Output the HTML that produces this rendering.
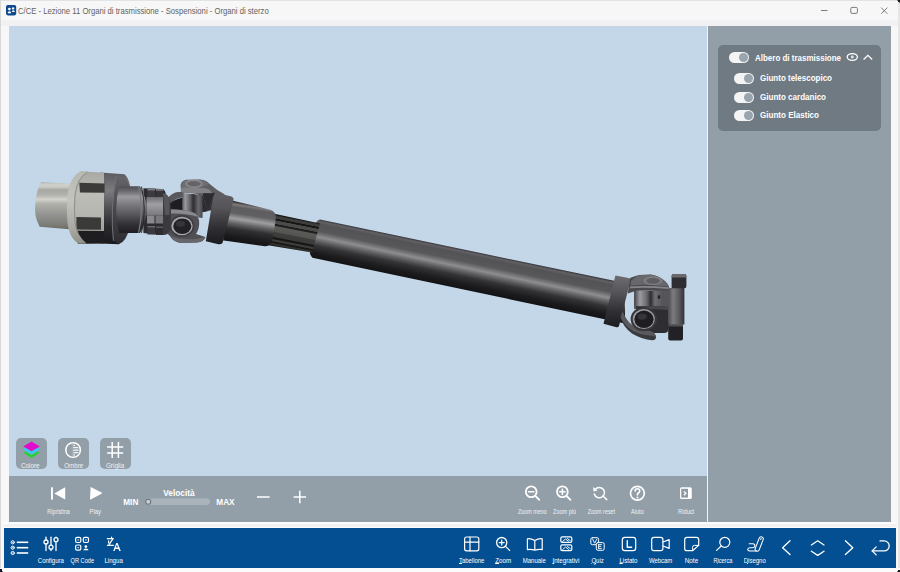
<!DOCTYPE html>
<html><head><meta charset="utf-8">
<style>
*{margin:0;padding:0;box-sizing:border-box}
html,body{width:900px;height:572px;overflow:hidden;background:#f7f7f7;font-family:"Liberation Sans",sans-serif}
.a{position:absolute}
.c{position:absolute;width:120px;text-align:center;white-space:nowrap;line-height:1}
.c span{display:inline-block;transform-origin:50% 50%}
.l{position:absolute;white-space:nowrap;line-height:1}
.l span{display:inline-block;transform-origin:0 50%}
.card{left:718px;top:45px;width:163px;height:86px;background:#6f7a83;border-radius:5px}
.tg{width:20px;height:11px;border-radius:6px;background:#f4f4f4}
.tg::after{content:"";position:absolute;right:1px;top:1px;width:9px;height:9px;border-radius:50%;background:#9aa4ad}
.vb{width:31px;height:31px;border-radius:5px;background:#939fa8}
svg{position:absolute;overflow:visible}

u{text-decoration:underline;text-decoration-thickness:0.7px;text-underline-offset:-0.2px}

</style></head><body>
<div class="a" style="left:0;top:0;width:900px;height:1px;background:#e3e3e3"></div>
<div class="a" style="left:0;top:20px;width:900px;height:6px;background:#f1f1f4"></div>
<div class="a" style="left:0;top:0;width:1px;height:572px;background:#d8d8d8"></div>
<div class="a" style="left:898px;top:0;width:2px;height:572px;background:#e6e6e6"></div>
<div class="a" style="left:9px;top:26px;width:698px;height:450px;background:#c3d7e8"></div>
<div class="a" style="left:707px;top:26px;width:1px;height:496px;background:#f2f5f8"></div>
<div class="a" style="left:708px;top:26px;width:183px;height:496px;background:#939fa8"></div>
<div class="a" style="left:9px;top:476px;width:698px;height:46px;background:#939fa8"></div>
<div class="a" style="left:4px;top:528px;width:892px;height:40px;background:#034f92"></div>
<div class="a" style="left:0;top:568px;width:900px;height:4px;background:#fbfbfb"></div>
<div class="a card"></div>
<div class="a tg" style="left:729px;top:52px"></div>
<div class="a tg" style="left:734px;top:73px"></div>
<div class="a tg" style="left:734px;top:92px"></div>
<div class="a tg" style="left:734px;top:110px"></div>
<div class="a vb" style="left:16px;top:438px"></div>
<div class="a vb" style="left:58px;top:438px"></div>
<div class="a vb" style="left:100px;top:438px"></div>
<div class="l" style="left:18px;top:6.5px;font-size:8.7px;color:#626262"><span style="transform:scaleX(0.885)">C/CE - Lezione 11 Organi di trasmissione - Sospensioni - Organi di sterzo</span></div>
<div class="l" style="left:755px;top:52.5px;font-size:9.5px;color:#fff;font-weight:bold"><span style="transform:scaleX(0.84)">Albero di trasmissione</span></div>
<div class="l" style="left:760px;top:73.2px;font-size:9.5px;color:#fff;font-weight:bold"><span style="transform:scaleX(0.842)">Giunto telescopico</span></div>
<div class="l" style="left:760px;top:91.8px;font-size:9.5px;color:#fff;font-weight:bold"><span style="transform:scaleX(0.845)">Giunto cardanico</span></div>
<div class="l" style="left:760px;top:110px;font-size:9.5px;color:#fff;font-weight:bold"><span style="transform:scaleX(0.847)">Giunto Elastico</span></div>
<div class="a" style="left:898px;top:0;width:2px;height:2px;background:#1c1c1c"></div>
<div class="a" style="left:897px;top:0;width:1px;height:1px;background:#777"></div>
<div class="a" style="left:899px;top:2px;width:1px;height:1px;background:#777"></div>
<div class="a" style="left:898px;top:570px;width:2px;height:2px;background:#1c1c1c"></div>
<div class="a" style="left:897px;top:571px;width:1px;height:1px;background:#777"></div>
<div class="a" style="left:0;top:569px;width:2px;height:3px;background:#14142a"></div>
<div class="a" style="left:2px;top:571px;width:1px;height:1px;background:#777"></div>
<div class="a" style="left:4px;top:522px;width:892px;height:2px;background:#fcfcfe"></div>
<div class="a" style="left:4px;top:524px;width:892px;height:3px;background:#f2f2f4"></div>
<div class="a" style="left:4px;top:527px;width:892px;height:1px;background:#fdfdfd"></div>

<svg class="a" style="left:0;top:0" width="900" height="572" viewBox="0 0 900 572">
<defs>
<linearGradient id="gBeige" gradientUnits="userSpaceOnUse" x1="0" y1="182" x2="0" y2="228"><stop offset="0" stop-color="#9a9a96"/><stop offset="0.04" stop-color="#cfcfcb"/><stop offset="0.11" stop-color="#cacac6"/><stop offset="0.17" stop-color="#a8a8a2"/><stop offset="0.28" stop-color="#b2b2ac"/><stop offset="0.38" stop-color="#d2d2cc"/><stop offset="0.48" stop-color="#b0b0aa"/><stop offset="0.72" stop-color="#929290"/><stop offset="0.96" stop-color="#7a7a74"/><stop offset="1" stop-color="#6a6a66"/></linearGradient>
<linearGradient id="gRim" gradientUnits="userSpaceOnUse" x1="0" y1="171" x2="0" y2="244">
<stop offset="0" stop-color="#b8b8b2"/><stop offset="0.4" stop-color="#c4c4be"/><stop offset="0.8" stop-color="#a8a8a2"/><stop offset="1" stop-color="#909088"/></linearGradient>
<linearGradient id="gBody" gradientUnits="userSpaceOnUse" x1="0" y1="172" x2="0" y2="244">
<stop offset="0" stop-color="#a9a9a4"/><stop offset="0.3" stop-color="#bdbdb8"/><stop offset="0.6" stop-color="#b6b6b0"/><stop offset="1" stop-color="#8e8e8a"/></linearGradient>
<linearGradient id="gCoupDark" gradientUnits="userSpaceOnUse" x1="0" y1="173" x2="0" y2="244">
<stop offset="0" stop-color="#5c5c60"/><stop offset="0.25" stop-color="#7c7c80"/><stop offset="0.5" stop-color="#505054"/><stop offset="0.75" stop-color="#2a2a2e"/><stop offset="1" stop-color="#1a1a1e"/></linearGradient>
<linearGradient id="gFace" gradientUnits="userSpaceOnUse" x1="0" y1="175" x2="0" y2="244">
<stop offset="0" stop-color="#66666a"/><stop offset="0.5" stop-color="#48484c"/><stop offset="1" stop-color="#2c2c30"/></linearGradient>
<linearGradient id="gHub" gradientUnits="userSpaceOnUse" x1="0" y1="186.5" x2="0" y2="233"><stop offset="0" stop-color="#505054"/><stop offset="0.1" stop-color="#6a6a6e"/><stop offset="0.22" stop-color="#9c9ca0"/><stop offset="0.38" stop-color="#7c7c80"/><stop offset="0.6" stop-color="#58585c"/><stop offset="0.8" stop-color="#333337"/><stop offset="1" stop-color="#1e1e22"/></linearGradient>
<linearGradient id="gSHub" gradientUnits="userSpaceOnUse" x1="0" y1="197" x2="0" y2="215.5"><stop offset="0" stop-color="#6e6e72"/><stop offset="0.4" stop-color="#a0a0a4"/><stop offset="1" stop-color="#78787c"/></linearGradient>
<linearGradient id="gTube" gradientUnits="userSpaceOnUse" x1="460" y1="248.7" x2="452" y2="287"><stop offset="0" stop-color="#343438"/><stop offset="0.05" stop-color="#626064"/><stop offset="0.12" stop-color="#535356"/><stop offset="0.3" stop-color="#58585b"/><stop offset="0.45" stop-color="#8e8e91"/><stop offset="0.56" stop-color="#5e5e61"/><stop offset="0.68" stop-color="#333335"/><stop offset="0.85" stop-color="#1c1c1e"/><stop offset="1" stop-color="#131315"/></linearGradient>
<linearGradient id="gSleeve" gradientUnits="userSpaceOnUse" x1="250" y1="204.3" x2="244" y2="243"><stop offset="0" stop-color="#38383c"/><stop offset="0.06" stop-color="#7e7a7c"/><stop offset="0.13" stop-color="#5e5c5e"/><stop offset="0.28" stop-color="#606062"/><stop offset="0.42" stop-color="#a09ea0"/><stop offset="0.54" stop-color="#646466"/><stop offset="0.68" stop-color="#303032"/><stop offset="0.88" stop-color="#1a1a1c"/><stop offset="1" stop-color="#141416"/></linearGradient>
<linearGradient id="gSpline" gradientUnits="userSpaceOnUse" x1="292" y1="218" x2="286" y2="248.5"><stop offset="0" stop-color="#181817"/><stop offset="0.05" stop-color="#3d3d3c"/><stop offset="0.11" stop-color="#3d3d3c"/><stop offset="0.13" stop-color="#151514"/><stop offset="0.17" stop-color="#181817"/><stop offset="0.19" stop-color="#4b4b49"/><stop offset="0.28" stop-color="#4b4b49"/><stop offset="0.3" stop-color="#1b1b1b"/><stop offset="0.34" stop-color="#222222"/><stop offset="0.37" stop-color="#5a5a57"/><stop offset="0.53" stop-color="#555552"/><stop offset="0.57" stop-color="#3d3d3c"/><stop offset="0.62" stop-color="#3d3d3c"/><stop offset="0.7" stop-color="#3a3a39"/><stop offset="0.73" stop-color="#151514"/><stop offset="0.77" stop-color="#181817"/><stop offset="0.8" stop-color="#3d3d3c"/><stop offset="0.84" stop-color="#3d3d3c"/><stop offset="0.87" stop-color="#151514"/><stop offset="0.9" stop-color="#181817"/><stop offset="0.92" stop-color="#30302e"/><stop offset="0.96" stop-color="#30302e"/><stop offset="1" stop-color="#10100f"/></linearGradient>
<linearGradient id="gCollar" gradientUnits="userSpaceOnUse" x1="0" y1="192" x2="0" y2="244">
<stop offset="0" stop-color="#626266"/><stop offset="0.3" stop-color="#555559"/><stop offset="0.7" stop-color="#2e2e32"/><stop offset="1" stop-color="#1c1c20"/></linearGradient>
<linearGradient id="gCollar2" gradientUnits="userSpaceOnUse" x1="0" y1="275" x2="0" y2="327">
<stop offset="0" stop-color="#6e6e72"/><stop offset="0.3" stop-color="#58585c"/><stop offset="0.7" stop-color="#303034"/><stop offset="1" stop-color="#1c1c20"/></linearGradient>
<linearGradient id="gSpindle" gradientUnits="userSpaceOnUse" x1="182.2" y1="0" x2="202.4" y2="0"><stop offset="0" stop-color="#5a5a5e"/><stop offset="0.15" stop-color="#9a9a9e"/><stop offset="0.42" stop-color="#5a5a5e"/><stop offset="0.55" stop-color="#2e2e32"/><stop offset="0.8" stop-color="#6a6a6e"/><stop offset="1" stop-color="#4a4a4e"/></linearGradient>
<linearGradient id="gSpindle2" gradientUnits="userSpaceOnUse" x1="634.6" y1="0" x2="661.5" y2="0"><stop offset="0" stop-color="#48484c"/><stop offset="0.2" stop-color="#9c9ca0"/><stop offset="0.45" stop-color="#6a6a6e"/><stop offset="0.6" stop-color="#2e2e32"/><stop offset="0.75" stop-color="#6e6e72"/><stop offset="1" stop-color="#5a5a5e"/></linearGradient>
<linearGradient id="gFlange" gradientUnits="userSpaceOnUse" x1="668" y1="0" x2="685" y2="0"><stop offset="0" stop-color="#4a4a4e"/><stop offset="0.3" stop-color="#7c7c80"/><stop offset="0.6" stop-color="#606064"/><stop offset="1" stop-color="#2e2e32"/></linearGradient>
</defs>
<!-- main tube -->
<path d="M320,219.6 L625,283.1 L625,323.6 L312.5,257.7 Q309.5,255 309.8,250 Q310.5,233 316,222.5 Q317.5,220 320,219.6 Z" fill="url(#gTube)"/>
<path d="M317,223.5 Q312.5,234 312,248" stroke="#a4a4a8" stroke-width="1.2" fill="none" opacity="0.75"/>
<!-- spline shaft -->
<path d="M272,213.2 L320,223.4 L312,252.5 L265,244.8 Z" fill="url(#gSpline)"/>
<!-- sleeve -->
<path d="M226,199 L270,209.8 Q276,211.5 275.8,218 L273,238 Q271,246.5 265,246.2 L220,240 Z" fill="url(#gSleeve)"/>
<path d="M226,200.5 Q218,220 220,239.4 L223.5,240 Q222,220 229,201.2 Z" fill="#6a6a6e"/>
<!-- collar 1 -->
<path d="M203,191 L216,192 L212.5,210 L203,212 Z" fill="#343438"/>
<path d="M214,192.2 L230.5,196.2 Q234,197.2 233.5,200 L222.5,243 Q221,244.5 218.5,244.2 L205.8,241.3 Z" fill="url(#gCollar)"/>
<!-- joint 1: back yoke ring -->
<path d="M164.5,204 Q168,195 176,192.3 L184,191.6 L184,197.2 Q176,197.6 171.5,202.5 L167.5,212 L164.5,212 Z" fill="#58585c"/>
<path d="M167.5,207 Q171,199.5 184,197.2 L184,215 L167,215 Z" fill="#1e1e22"/>
<!-- right yoke body behind spindle -->
<path d="M198,192 L214,192.2 L208,211 L199,213 Z" fill="#2c2c30"/>
<!-- spindle -->
<path d="M182.2,193 L202.4,195 L202.6,218 L182.2,216 Z" fill="url(#gSpindle)"/>
<!-- top ear + arm -->
<path d="M180.7,187.6 Q180,181 186,179.8 L200,179.4 Q207,180 209.4,183.7 L217.2,189.9 L225,194.5 L219,196 L213,195.5 L211.8,199.2 L207.9,210.9 Q205,203 203,196 Q198,193.5 190,193 L182,192.4 Q180.5,190 180.7,187.6 Z" fill="#5e5e62"/>
<path d="M181.5,186.8 Q181.5,181.2 186,180.2 L200,179.8 Q206,180.3 208.8,183.8 Q204,187.6 196,187.9 L184,187.7 Z" fill="#6e6e72"/>
<ellipse cx="194" cy="183.7" rx="8" ry="3.6" fill="none" stroke="#909094" stroke-width="1.3"/>
<ellipse cx="194" cy="183.7" rx="5.6" ry="2.3" fill="#646468"/>
<path d="M181,187.6 L203,187.9 Q208,188.2 210,190.3 L211.8,193.2 L203,193.3 L182.6,192.7 Q181,190.5 181,187.6 Z" fill="#828286"/>
<path d="M203,193.3 L211.8,193.2 L215,192.8 L211.8,199.2 L207.9,210.9 Q205.5,203 203,196 Z" fill="#2c2c30"/>
<!-- front yoke arm (left) -->
<path d="M159,210 Q172,208 188.6,211 Q197,213 199,220 Q200,228 196,234 L205.4,237 Q204,242 197,242.5 L180,243 Q172,241 170,236 Q162,230 160,219 Z" fill="#505054"/>
<path d="M159,210 Q172,208 188.6,211 Q196,212.5 198.5,217 Q188,213.8 174,213.5 Q166,213.5 159.5,214.5 Z" fill="#8a8a8e"/>
<path d="M171,236 Q180,240 195,239 Q201,238 205.4,237 Q203,241.5 197,242.5 L180,243 Q173,241 171,236 Z" fill="#68686c"/>
<!-- bearing cap -->
<ellipse cx="182" cy="226" rx="12.5" ry="11" fill="#3e3e42"/>
<ellipse cx="182" cy="226" rx="10.7" ry="9.2" fill="#a8a8ac"/>
<ellipse cx="182.3" cy="226.2" rx="9" ry="7.7" fill="#222226"/>
<ellipse cx="180.5" cy="223.8" rx="4.5" ry="3" fill="#36363a"/>
<!-- spline hub 1 -->
<path d="M143.4,188.2 L162,189 Q166,190 166,196 L165.5,229 Q165,235 160,235 L143.4,233 Z" fill="#2c2c30"/>
<rect x="147.5" y="188.6" width="7.5" height="8.4" fill="#3c3c40"/>
<rect x="156" y="189" width="7.5" height="8" fill="#36363a"/>
<rect x="147.5" y="188.6" width="7.5" height="1.8" fill="#808084"/>
<rect x="156" y="189" width="7.5" height="1.8" fill="#76767a"/>
<rect x="146.5" y="197" width="18" height="18.5" fill="url(#gSHub)"/>
<rect x="147" y="215.5" width="7.5" height="8" fill="#8a8a8e"/>
<rect x="155.5" y="215.5" width="8" height="8" fill="#7a7a7e"/>
<rect x="147.5" y="226" width="7.5" height="8.5" fill="#3a3a3e"/>
<rect x="156" y="226.5" width="7.5" height="8.5" fill="#2e2e32"/>
<rect x="147.5" y="226" width="7.5" height="1.4" fill="#6a6a6e"/>
<rect x="156" y="226.5" width="7.5" height="1.4" fill="#5e5e62"/>
<path d="M163,193 Q171,195 171,210 L170.5,228 Q169.5,235.5 163,235 Z" fill="#3a3a3e"/>
<path d="M163,193 Q168,194 169.5,200 L169.5,215 L165,215 Z" fill="#56565a"/>
<!-- coupling: dark section with end face -->
<path d="M100,172.6 L124.6,174.3 Q131,180 131.5,200 Q132,226 119,244.2 L100,243.5 Z" fill="url(#gCoupDark)"/>
<path d="M116.2,176.4 Q125,175.5 129.5,186 Q132.5,205 129.5,228 Q126,242 119,244 L113.4,240.7 Q110,210 116.2,176.4 Z" fill="url(#gFace)"/>
<path d="M116.2,176.4 Q110,210 113.4,240.7" stroke="#727276" stroke-width="1" fill="none"/>
<!-- hub cylinder -->
<path d="M119,186.2 L140,186.2 Q146.5,198 146.8,210 Q146.5,222 140,233 L119,233 Q113.5,210 119,186.2 Z" fill="url(#gHub)"/>
<path d="M138.6,186.4 Q144,210 138.6,232.8" stroke="#7c7c80" stroke-width="1.2" fill="none"/>
<path d="M141.5,186.6 Q147,210 141.5,232.8" stroke="#2a2a2e" stroke-width="1" fill="none"/>
<!-- coupling light body -->
<path d="M81,171.2 L104,172.8 L104,243.6 L79.5,243.8 Q69,236 68.5,208 Q69,180 81,171.2 Z" fill="url(#gBody)"/>
<path d="M79.3,182.8 L104.6,183.4 L104.6,192.8 L80,192.5 Z" fill="#3b3b3a"/>
<path d="M76.4,217 L101,217.4 L101,229.7 L76.4,229.5 Z" fill="#3a3a39"/>
<path d="M77,230.8 L104,231 L104,243.6 L77.8,243.8 Z" fill="#1e1e20"/>
<!-- left beige cylinder -->
<path d="M41,182.2 L72,183.8 Q66,206 70,229.2 L39.7,226.8 Q33.8,216 35.2,205 Q36,191 41,182.2 Z" fill="url(#gBeige)"/>
<!-- rim -->
<path d="M81,171.2 Q70,176 67.5,195 Q66,209 67.5,223 Q70,240 79.5,243.8 L86,243.4 Q76.5,236 75,222 Q74,209 75,195 Q77,178 87.5,172 Z" fill="url(#gRim)"/>
<path d="M87.5,172 Q77,178 75,195 Q74,209 75,222 Q76.5,236 86,243.4" stroke="#8c8c86" stroke-width="1" fill="none"/>
<!-- collar 2 -->
<path d="M615.4,275.5 L628.5,278 Q631,278.6 630.3,281 L619,326 Q618.4,327.6 616.5,327.3 L603.5,323.8 Z" fill="url(#gCollar2)"/>
<!-- joint 2 -->
<path d="M634,291 L669,289.5 L669.5,309 L634,309 Z" fill="#55555a"/>
<path d="M634.6,291 L661.5,291 L661.5,306 L634.6,306 Z" fill="url(#gSpindle2)"/>
<ellipse cx="659" cy="297" rx="1.3" ry="2" fill="#222226"/>
<path d="M627.7,293.4 L630,278 Q635,276 639.2,274.9 L650.8,274.5 Q658,275.5 663,279.5 Q668,283 669.2,287.2 L670,290.3 L666,290.3 L650.8,290.3 Q640,290.5 635.4,291 Z" fill="#4a4a4e"/>
<path d="M631,281 Q635,276.5 639.2,275.2 L650.8,274.8 Q658,275.8 663,279.8 Q667,283 668.5,286.5 Q660,285.5 650,285 Q640,284.5 631,285.5 Z" fill="#68686c"/>
<ellipse cx="653" cy="280.7" rx="9.5" ry="4.4" fill="#7e7e82"/>
<ellipse cx="653" cy="280.9" rx="6.8" ry="2.9" fill="#5e5e62"/>
<path d="M630,286.5 Q645,285 668.8,287.3 L669,289 Q645,287 630,288.3 Z" fill="#86868a"/>
<!-- flange -->
<path d="M668.9,288 L684.4,288 L684.4,324.5 L668.5,324.5 Z" fill="url(#gFlange)"/>
<path d="M671.6,276 Q671.6,274 673.5,274 L684.5,274 Q686.4,274 686.4,276 L686.4,286 Q686.4,288.2 684.5,288.2 L671.6,288.2 Z" fill="#2e2e32"/>
<path d="M671.6,276 Q671.6,274 673.5,274 L684.5,274 Q686.4,274 686.4,276 L686.4,277.5 L671.6,277.5 Z" fill="#6a6a6e"/>
<path d="M668.2,324.5 L683,324.5 L683,338.6 Q683,340.6 681,340.6 L670.2,340.6 Q668.2,340.6 668.2,338.6 Z" fill="#222226"/>
<path d="M668.2,324.5 L683,324.5 L683,326.5 L668.2,326.5 Z" fill="#505054"/>
<path d="M636,306.2 L664,306.2 Q668.7,306.5 668.7,311 L668.7,328 Q668.7,333 664,333 L640,333 Z" fill="#2e2e32"/>
<path d="M636,306.2 L664,306.2 Q668.5,306.5 668.7,310 L650,309 Z" fill="#48484c"/>
<path d="M619.8,316 Q623,327 632,333.5 Q642,339.5 652,340.2 Q656.5,340.2 656,336.5 Q655,332 650,331 Q640,330 633,326 Q626,321 622.5,311 Z" fill="#3a3a3e"/>
<path d="M621,318 Q625,326 633,331 Q641,335 650,335.5 Q654.5,335.5 655.8,337.5 Q655,332 650,331 Q640,330 633,326 Q626,321 622.5,311 Z" fill="#5a5a5e"/>
<ellipse cx="643.8" cy="319.1" rx="13.2" ry="12.2" fill="#38383c"/>
<ellipse cx="643.8" cy="319.1" rx="11" ry="10" fill="#9c9ca0"/>
<ellipse cx="644" cy="319.3" rx="9.6" ry="8.7" fill="#1e1e22"/>
<ellipse cx="642.2" cy="316.6" rx="4.6" ry="3.2" fill="#34343a"/>
</svg>

<svg class="a" style="left:0;top:0" width="900" height="572" viewBox="0 0 900 572">
<!-- app icon -->
<rect x="6" y="5" width="10.2" height="10.4" rx="1.8" fill="#0f4a8e"/>
<circle cx="9.4" cy="9.1" r="1.35" fill="#fff"/>
<path d="M7.7,13.2 Q7.9,11.4 9.4,11.3 Q11,11.4 11.3,13.2 Z" fill="#fff"/>
<circle cx="13.1" cy="8.4" r="1.2" fill="#f4f2ee"/>
<path d="M11.8,12 Q12,10.3 13.1,10.2 Q14.6,10.3 14.9,12 Z" fill="#f4f2ee"/>
<!-- window controls -->
<g stroke="#6e6e6e" stroke-width="0.9" fill="none">
<line x1="821" y1="10.5" x2="827.5" y2="10.5"/>
<rect x="850.8" y="7.4" width="6.6" height="6" rx="1.2"/>
<line x1="881.2" y1="7.6" x2="887.4" y2="13.8"/>
<line x1="887.4" y1="7.6" x2="881.2" y2="13.8"/>
</g>
<!-- panel icons: eye + chevron -->
<g stroke="#fff" fill="none">
<ellipse cx="852.3" cy="57" rx="5.1" ry="3.3" stroke-width="1.3"/>
<path d="M863.6,59.5 L867.9,55.4 L872.2,59.5" stroke-width="1.3"/>
</g>
<circle cx="852.3" cy="57" r="1.4" fill="#e6e8ea"/>
<!-- view button icons -->
<path d="M23.5,452.8 L31.5,458 L39.5,452.8 L37.5,451.4 L31.5,455.2 L25.5,451.4 Z" fill="#22d42a"/>
<path d="M23.4,449.2 L31.5,454.6 L39.6,449.2 L37.2,447.6 L31.5,451.2 L25.8,447.6 Z" fill="#2ccff5"/>
<path d="M23.3,446.4 L31.5,441.6 L39.7,446.4 L31.5,451.2 Z" fill="#e10ccc"/>
<g stroke="#fff" fill="none">
<circle cx="73.1" cy="450" r="7.3" stroke-width="1.5"/>
<line x1="72.3" y1="443.5" x2="72.3" y2="456.5" stroke-width="0.8" stroke="#aab6c0"/>
<g stroke-width="1.3" stroke="#f4f6f8">
<line x1="73.3" y1="445.3" x2="75" y2="445.3"/><line x1="73.3" y1="447.6" x2="78.2" y2="447.6"/><line x1="73.3" y1="450.2" x2="78.6" y2="450.2"/><line x1="73.3" y1="452.6" x2="78.2" y2="452.6"/><line x1="73.3" y1="454.9" x2="75" y2="454.9"/>
</g>
<g stroke-width="1.5">
<line x1="112.2" y1="442" x2="112.2" y2="458"/><line x1="118.4" y1="442" x2="118.4" y2="458"/>
<line x1="107.1" y1="447" x2="123.2" y2="447"/><line x1="107.1" y1="453" x2="123.2" y2="453"/>
</g>
</g>
<!-- control bar icons -->
<g fill="#fff">
<rect x="51" y="487.3" width="1.9" height="12.3"/>
<path d="M65.2,487.3 L54.3,493.4 L65.2,499.6 Z"/>
<path d="M90.6,487.4 Q90,486.8 90.6,486.9 L101.6,492.6 Q102.4,493.2 101.6,493.8 L90.6,499.5 Q90,499.7 90,499 Z"/>
</g>
<g stroke="#fff" fill="none" stroke-width="1.5">
<line x1="257" y1="497" x2="269.6" y2="497"/>
<line x1="293.6" y1="497" x2="306" y2="497"/>
<line x1="299.8" y1="490.8" x2="299.8" y2="503.2"/>
</g>
<rect x="145" y="498.6" width="65" height="6.4" rx="3.2" fill="#aab3ba"/>
<circle cx="148.2" cy="501.8" r="2.5" fill="#c9ced2" stroke="#69737b" stroke-width="1.1"/>
<g stroke="#fff" fill="none" stroke-width="1.8" stroke-linecap="round">
<circle cx="531.2" cy="491.8" r="5.4"/>
<line x1="528.6" y1="491.8" x2="533.8" y2="491.8" stroke-width="1.6"/>
<line x1="535.4" y1="496" x2="539.3" y2="499.9"/>
<circle cx="562.4" cy="491.8" r="5.4"/>
<line x1="559.8" y1="491.8" x2="565" y2="491.8" stroke-width="1.6"/>
<line x1="562.4" y1="489.2" x2="562.4" y2="494.4" stroke-width="1.6"/>
<line x1="566.6" y1="496" x2="570.5" y2="499.9"/>
<path d="M595.2,489.4 A5.2,5.2 0 1 1 594.3,494" stroke-width="1.5"/>
<line x1="603" y1="496" x2="606.8" y2="499.6" stroke-width="1.5"/>
<circle cx="637.4" cy="493.2" r="6.9" stroke-width="1.7"/>
<path d="M635.1,491.1 Q635.1,488.8 637.4,488.8 Q639.7,488.8 639.7,490.9 Q639.7,492.5 637.5,493.5 L637.5,495" stroke-width="1.6"/>
</g>
<path d="M593.2,486.9 L593.5,491.4 L597.6,490.4 Z" fill="#fff"/>
<circle cx="637.5" cy="497.4" r="1" fill="#fff"/>
<rect x="680" y="487.3" width="11.8" height="11.8" rx="1.6" fill="#fff"/>
<rect x="681.2" y="488.8" width="6.8" height="8.8" fill="#8f9ba4"/>
<path d="M683.9,491.4 L685.9,493.3 L683.9,495.2" stroke="#fff" stroke-width="1.3" fill="none"/>
<!-- bottom bar icons -->
<g stroke="#fff" fill="none" stroke-width="1.2" stroke-linecap="round" stroke-linejoin="round">
<circle cx="12.7" cy="542.3" r="1.6" stroke-width="1"/>
<circle cx="12.7" cy="547.7" r="1.6" stroke-width="1"/>
<circle cx="12.7" cy="553" r="1.6" stroke-width="1"/>
<line x1="16.8" y1="542.3" x2="28.2" y2="542.3" stroke-width="1.6" stroke-linecap="butt"/>
<line x1="16.8" y1="547.7" x2="28.2" y2="547.7" stroke-width="1.6" stroke-linecap="butt"/>
<line x1="16.8" y1="553" x2="28.2" y2="553" stroke-width="1.6" stroke-linecap="butt"/>
<g stroke-width="1.3">
<line x1="46" y1="537.2" x2="46" y2="540"/><line x1="46" y1="544" x2="46" y2="550.6"/>
<line x1="51" y1="537.2" x2="51" y2="545.2"/><line x1="51" y1="549.2" x2="51" y2="550.6"/>
<line x1="56" y1="537.2" x2="56" y2="537.7"/><line x1="56" y1="541.7" x2="56" y2="550.6"/>
<circle cx="46" cy="542" r="2"/><circle cx="51" cy="547.2" r="2"/><circle cx="56" cy="539.7" r="2"/>
</g>
<rect x="75.6" y="537.3" width="5.2" height="5.2" rx="1.4"/>
<rect x="83.3" y="537.3" width="5.2" height="5.2" rx="1.4"/>
<rect x="75.6" y="545" width="5.2" height="5.2" rx="1.4"/>
<!-- tabellone -->
<rect x="464.6" y="537" width="14.2" height="13.8" rx="2"/>
<line x1="464.6" y1="542.2" x2="478.8" y2="542.2"/>
<line x1="470" y1="537" x2="470" y2="550.8"/>
<!-- zoom -->
<circle cx="501.7" cy="542.6" r="5.1" stroke-width="1.3"/>
<line x1="499.2" y1="542.6" x2="504.2" y2="542.6"/>
<line x1="501.7" y1="540.1" x2="501.7" y2="545.1"/>
<line x1="505.5" y1="546.4" x2="509.6" y2="550.4" stroke-width="1.3"/>
<!-- manuale -->
<path d="M534.8,540.5 Q531,538.3 527.4,538.8 L527.4,549.6 Q531,549.1 534.8,550.2 Q538.6,549.1 542.2,549.6 L542.2,538.8 Q538.6,538.3 534.8,540.5 Z M534.8,540.5 L534.8,550.2"/>
<!-- integrativi -->
<rect x="560.8" y="536.8" width="11" height="5.6" rx="1.4"/>
<rect x="560.8" y="544.8" width="11" height="5.8" rx="1.4"/>
<path d="M562.5,541.6 L565.5,539 L568.5,541.2 M567.5,538.6 L570.2,540.6" stroke-width="1"/>
<path d="M562.5,549.8 L565.5,547 L568.5,549.4 M567.5,546.6 L570.2,548.6" stroke-width="1"/>
<!-- quiz -->
<rect x="590.8" y="537.7" width="7.8" height="7" rx="1.6" stroke-width="1"/>
<rect x="596.3" y="542.6" width="7.9" height="7.7" rx="1.6" stroke-width="1" fill="#034f92"/>
<path d="M592.7,539.3 L594.7,543.2 L596.7,539.3" stroke-width="0.9"/>
<path d="M598.6,544.6 L598.6,548.4 M598.6,544.6 L601.4,544.6 M598.6,546.4 L600.8,546.4 M598.6,548.4 L601.4,548.4" stroke-width="0.9"/>
<!-- listato -->
<rect x="622.3" y="537.3" width="13.4" height="13.4" rx="2.6"/>
<path d="M627.3,540.6 L627.3,547.3 L631.6,547.3" stroke-width="1.4"/>
<!-- webcam -->
<rect x="651.7" y="537.3" width="11.2" height="13.4" rx="2.2"/>
<path d="M663,542 L669.2,539.6 L669.2,548.4 L663,546"/>
<!-- note -->
<path d="M687,537.3 L696.4,537.3 Q698.7,537.3 698.7,539.6 L698.7,545.4 L692.6,550.7 L687,550.7 Q684.7,550.7 684.7,548.4 L684.7,539.6 Q684.7,537.3 687,537.3 Z"/>
<path d="M698.7,545.4 L694.4,545.4 Q692.6,545.4 692.6,547.2 L692.6,550.7" stroke-width="1"/>
<!-- ricerca -->
<circle cx="724.8" cy="542.3" r="5" stroke-width="1.2"/>
<line x1="721.2" y1="546" x2="716.6" y2="550.4" stroke-width="1.2"/>
<!-- disegno -->
<rect x="-2.1" y="-7.6" width="4.2" height="15.2" rx="2.1" transform="translate(759.2,544) rotate(21)" stroke-width="1.1"/>
<path d="M760.6,539.6 L761.1,538.4" stroke-width="1"/>
<path d="M749.2,543.8 L752.8,543.8 Q755,544 754.8,546 Q754.5,547.8 752.2,547.8 L749.8,547.8 Q747.7,548 747.7,549.4 Q747.8,551 749.6,551 L756.2,551" stroke-width="1.1"/>
<!-- nav -->
<path d="M790,540.8 L782.6,547.7 L790,554.6" stroke-width="1.3"/>
<path d="M811.4,545 L817.7,540.8 L824,545" stroke-width="1.3"/>
<path d="M811.4,551.2 L817.7,555.4 L824,551.2" stroke-width="1.3"/>
<path d="M845.4,540.8 L852.8,547.7 L845.4,554.6" stroke-width="1.3"/>
<path d="M872.2,550.9 L884.2,550.9 A5,5 0 0 0 884.2,540.9 L880,540.9" stroke-width="1.3"/>
<path d="M876.2,546.9 L872.2,550.9 L876.2,554.9" stroke-width="1.3"/>
</g>
<!-- QR person -->
<rect x="77.6" y="539.3" width="1.2" height="1.2" fill="#fff"/>
<rect x="85.3" y="539.3" width="1.2" height="1.2" fill="#fff"/>
<rect x="77.6" y="547" width="1.2" height="1.2" fill="#fff"/>
<circle cx="12.7" cy="542.3" r="0.6" fill="#fff"/><circle cx="12.7" cy="547.7" r="0.6" fill="#fff"/><circle cx="12.7" cy="553" r="0.6" fill="#fff"/>
<circle cx="85.9" cy="546.6" r="1.4" fill="#fff"/>
<path d="M83.2,550.3 Q83.4,548.5 85.9,548.5 Q88.4,548.5 88.6,550.3 Z" fill="#fff"/>
<!-- lingua glyph -->
<g stroke="#fff" fill="none" stroke-width="1.2" stroke-linecap="round">
<path d="M107.3,538.6 L113.3,538.6 M111.6,537.1 L111.6,538.6 M112.9,538.9 L109,544.6 M108.7,540.8 L108.5,542.8 M107.4,545.3 L113.4,545.3"/>
</g>
<path d="M113.2,551 L116.3,543 L117.6,543 L120.8,551 L119.3,551 L118.5,548.9 L115.3,548.9 L114.6,551 Z M115.8,547.6 L118,547.6 L116.95,544.6 Z" fill="#fff" fill-rule="evenodd"/>
</svg>

<div class="c" style="left:-9.049999999999997px;top:557.5px;font-size:6.4px;color:#ffffff;font-weight:normal"><span style="transform:scaleX(0.94)">Configura</span></div>
<div class="c" style="left:22.450000000000003px;top:557.5px;font-size:6.4px;color:#ffffff;font-weight:normal"><span style="transform:scaleX(0.886)">QR Code</span></div>
<div class="c" style="left:53.95px;top:557.5px;font-size:6.4px;color:#ffffff;font-weight:normal"><span style="transform:scaleX(0.957)">Lingua</span></div>
<div class="c" style="left:411.5px;top:557.5px;font-size:6.4px;color:#ffffff;font-weight:normal"><span style="transform:scaleX(0.926)"><u>T</u>abellone</span></div>
<div class="c" style="left:443.15px;top:557.5px;font-size:6.4px;color:#ffffff;font-weight:normal"><span style="transform:scaleX(0.98)"><u>Z</u>oom</span></div>
<div class="c" style="left:474.15px;top:557.5px;font-size:6.4px;color:#ffffff;font-weight:normal"><span style="transform:scaleX(0.94)"><u>M</u>anuale</span></div>
<div class="c" style="left:506.25px;top:557.5px;font-size:6.4px;color:#ffffff;font-weight:normal"><span style="transform:scaleX(0.967)"><u>I</u>ntegrativi</span></div>
<div class="c" style="left:537.25px;top:557.5px;font-size:6.4px;color:#ffffff;font-weight:normal"><span style="transform:scaleX(0.93)"><u>Q</u>uiz</span></div>
<div class="c" style="left:568.6px;top:557.5px;font-size:6.4px;color:#ffffff;font-weight:normal"><span style="transform:scaleX(0.957)"><u>L</u>istato</span></div>
<div class="c" style="left:600.3px;top:557.5px;font-size:6.4px;color:#ffffff;font-weight:normal"><span style="transform:scaleX(0.93)"><u>W</u>ebcam</span></div>
<div class="c" style="left:631.45px;top:557.5px;font-size:6.4px;color:#ffffff;font-weight:normal"><span style="transform:scaleX(1.0)"><u>N</u>ote</span></div>
<div class="c" style="left:663.05px;top:557.5px;font-size:6.4px;color:#ffffff;font-weight:normal"><span style="transform:scaleX(0.87)"><u>R</u>icerca</span></div>
<div class="c" style="left:694.55px;top:557.5px;font-size:6.4px;color:#ffffff;font-weight:normal"><span style="transform:scaleX(0.94)"><u>D</u>isegno</span></div>
<div class="c" style="left:-1.3500000000000014px;top:509px;font-size:6.5px;color:#f0f2f4;font-weight:normal"><span style="transform:scaleX(0.825)">Ripristina</span></div>
<div class="c" style="left:35.2px;top:509px;font-size:6.5px;color:#f0f2f4;font-weight:normal"><span style="transform:scaleX(0.91)">Play</span></div>
<div class="c" style="left:472.65px;top:509.3px;font-size:6.5px;color:#f0f2f4;font-weight:normal"><span style="transform:scaleX(0.826)">Zoom meno</span></div>
<div class="c" style="left:504.45000000000005px;top:509.3px;font-size:6.5px;color:#f0f2f4;font-weight:normal"><span style="transform:scaleX(0.848)">Zoom più</span></div>
<div class="c" style="left:541.1px;top:509.3px;font-size:6.5px;color:#f0f2f4;font-weight:normal"><span style="transform:scaleX(0.83)">Zoom reset</span></div>
<div class="c" style="left:577.8px;top:509.3px;font-size:6.5px;color:#f0f2f4;font-weight:normal"><span style="transform:scaleX(0.857)">Aiuto</span></div>
<div class="c" style="left:626.2px;top:509.3px;font-size:6.5px;color:#f0f2f4;font-weight:normal"><span style="transform:scaleX(0.9)">Riduci</span></div>
<div class="c" style="left:-29.3px;top:462px;font-size:7px;color:#f0f2f4;font-weight:normal"><span style="transform:scaleX(0.9)">Colore</span></div>
<div class="c" style="left:13.25px;top:462px;font-size:7px;color:#f0f2f4;font-weight:normal"><span style="transform:scaleX(0.88)">Ombre</span></div>
<div class="c" style="left:55.349999999999994px;top:462px;font-size:7px;color:#f0f2f4;font-weight:normal"><span style="transform:scaleX(0.91)">Griglia</span></div>
<div class="c" style="left:119.19999999999999px;top:487.5px;font-size:9.5px;color:#ffffff;font-weight:bold"><span style="transform:scaleX(0.876)">Velocità</span></div>
<div class="c" style="left:71.15px;top:498px;font-size:8.5px;color:#ffffff;font-weight:bold"><span style="transform:scaleX(0.966)">MIN</span></div>
<div class="c" style="left:165.7px;top:498px;font-size:8.5px;color:#ffffff;font-weight:bold"><span style="transform:scaleX(0.967)">MAX</span></div>
</body></html>
